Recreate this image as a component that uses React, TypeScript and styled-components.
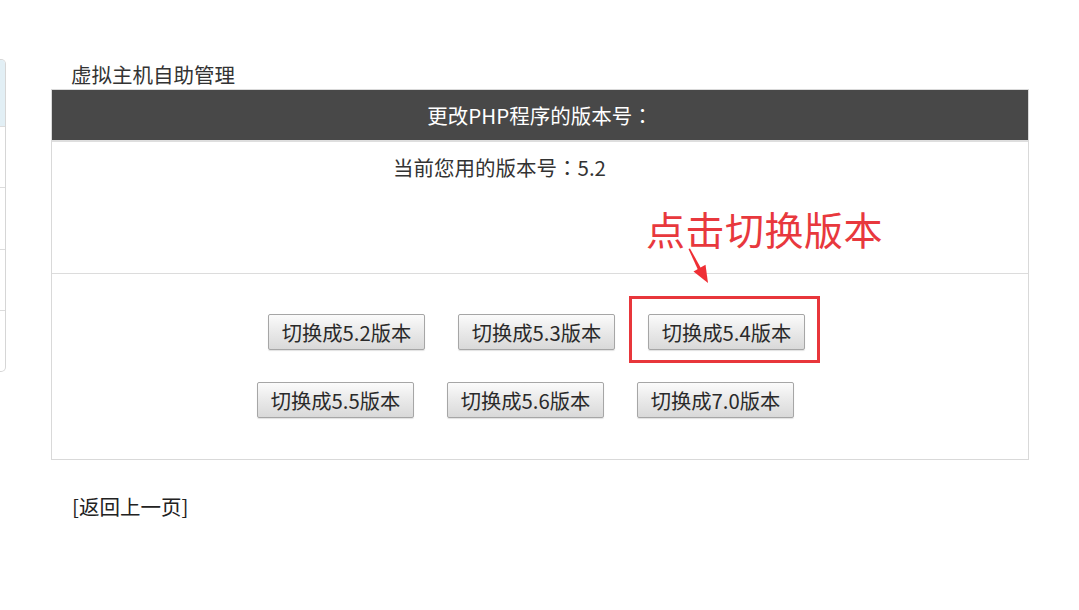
import React from "react";
import styled, { createGlobalStyle } from "styled-components";

const Global = createGlobalStyle`
  html, body { margin: 0; padding: 0; background: #fff; }
  body { font-family: "Noto Sans CJK SC", "Noto Sans", sans-serif; color: #333; }
`;

const Page = styled.div`
  display: flex;
  align-items: flex-start;
  width: 1079px;
  min-height: 610px;
`;

const Sidebar = styled.div`
  margin-top: 59px;
  width: 5px;
  border: 1px solid #d6d6d6;
  border-left: none;
  border-radius: 0 5px 5px 0;
  display: flex;
  flex-direction: column;
  overflow: hidden;
`;

const SideHead = styled.div`
  height: 66px;
  background: #e2eff5;
`;

const SideItem = styled.div<{ $h: number }>`
  height: ${(p) => p.$h}px;
  border-top: 1px solid #dcdcdc;
`;

const Main = styled.div`
  margin-left: 45px;
  width: 978px;
  display: flex;
  flex-direction: column;
`;

const Title = styled.div`
  margin-top: 61px;
  padding-left: 20px;
  font-size: 20.5px;
  line-height: 26px;
  height: 26px;
  margin-bottom: 2px;
  color: #333;
`;

const Card = styled.div`
  position: relative;
  border: 1px solid #d9d9d9;
  display: flex;
  flex-direction: column;
`;

const Header = styled.div`
  height: 50px;
  background: #484848;
  border-bottom: 2px solid #dedede;
  color: #fff;
  font-size: 20.5px;
  display: flex;
  align-items: center;
  justify-content: center;
`;

const Colon = styled.span`
  font-family: "Noto Sans CJK TC", "Noto Sans CJK SC", sans-serif;
`;

const CurrentRow = styled.div`
  height: 132px;
  border-bottom: 1px solid #dcdcdc;
  padding: 12px 81px 0 0;
  box-sizing: border-box;
  text-align: center;
  font-size: 20.5px;
  line-height: 26px;
  color: #333;
`;

const ButtonsArea = styled.div`
  padding: 40px 0 41px;
  display: flex;
  flex-direction: column;
  gap: 32px;
`;

const ButtonRow = styled.div<{ $shift: number }>`
  display: flex;
  justify-content: center;
  gap: 33px;
  padding-right: ${(p) => p.$shift}px;
`;

const BtnWrap = styled.div`
  position: relative;
`;

const VersionButton = styled.button`
  width: 157px;
  height: 36px;
  padding: 0;
  border: 1px solid #a6a6a6;
  border-radius: 2px;
  background: linear-gradient(#fbfbfb, #e9e9e9 50%, #d9d9d9);
  box-shadow: 0 1px 1px rgba(0, 0, 0, 0.12);
  font-family: "Noto Sans CJK SC", "Noto Sans", sans-serif;
  font-size: 20.3px;
  line-height: 34px;
  color: #2a2a2a;
  cursor: pointer;
`;

const Highlight = styled.div`
  position: absolute;
  left: -19px;
  top: -18px;
  right: -15px;
  bottom: -13px;
  border: 3px solid #e8363b;
  pointer-events: none;
`;

const Note = styled.div`
  position: absolute;
  left: 594px;
  top: 116px;
  font-size: 39px;
  line-height: 44px;
  color: #e8383d;
  letter-spacing: 0.5px;
  white-space: nowrap;
`;

const Arrow = styled.svg`
  position: absolute;
  left: 629px;
  top: 151px;
  overflow: visible;
`;

const Back = styled.div`
  margin-top: 33px;
  padding-left: 21px;
  font-size: 20.5px;
  line-height: 26px;
  color: #222;
`;

const rows = [
  { shift: 7, versions: ["5.2", "5.3", "5.4"] },
  { shift: 29, versions: ["5.5", "5.6", "7.0"] },
];

export default function App() {
  return (
    <>
      <Global />
      <Page>
        <Sidebar>
          <SideHead />
          <SideItem $h={60} />
          <SideItem $h={61} />
          <SideItem $h={60} />
          <SideItem $h={60} />
        </Sidebar>
        <Main>
          <Title>虚拟主机自助管理</Title>
          <Card>
            <Header>
              更改PHP程序的版本号<Colon>：</Colon>
            </Header>
            <CurrentRow>
              当前您用的版本号<Colon>：</Colon>5.2
            </CurrentRow>
            <ButtonsArea>
              {rows.map((r, i) => (
                <ButtonRow key={i} $shift={r.shift}>
                  {r.versions.map((v) => (
                    <BtnWrap key={v}>
                      <VersionButton>切换成{v}版本</VersionButton>
                      {v === "5.4" && <Highlight />}
                    </BtnWrap>
                  ))}
                </ButtonRow>
              ))}
            </ButtonsArea>
            <Note>点击切换版本</Note>
            <Arrow width="40" height="50" viewBox="0 0 40 50">
              <polygon points="7.5,8 9,7.4 20.5,28.2 17.4,29.8" fill="#ef2f35" />
              <polygon points="12.5,30.6 24.5,23.8 27,42" fill="#ef2f35" />
            </Arrow>
          </Card>
          <Back>[返回上一页]</Back>
        </Main>
      </Page>
    </>
  );
}
